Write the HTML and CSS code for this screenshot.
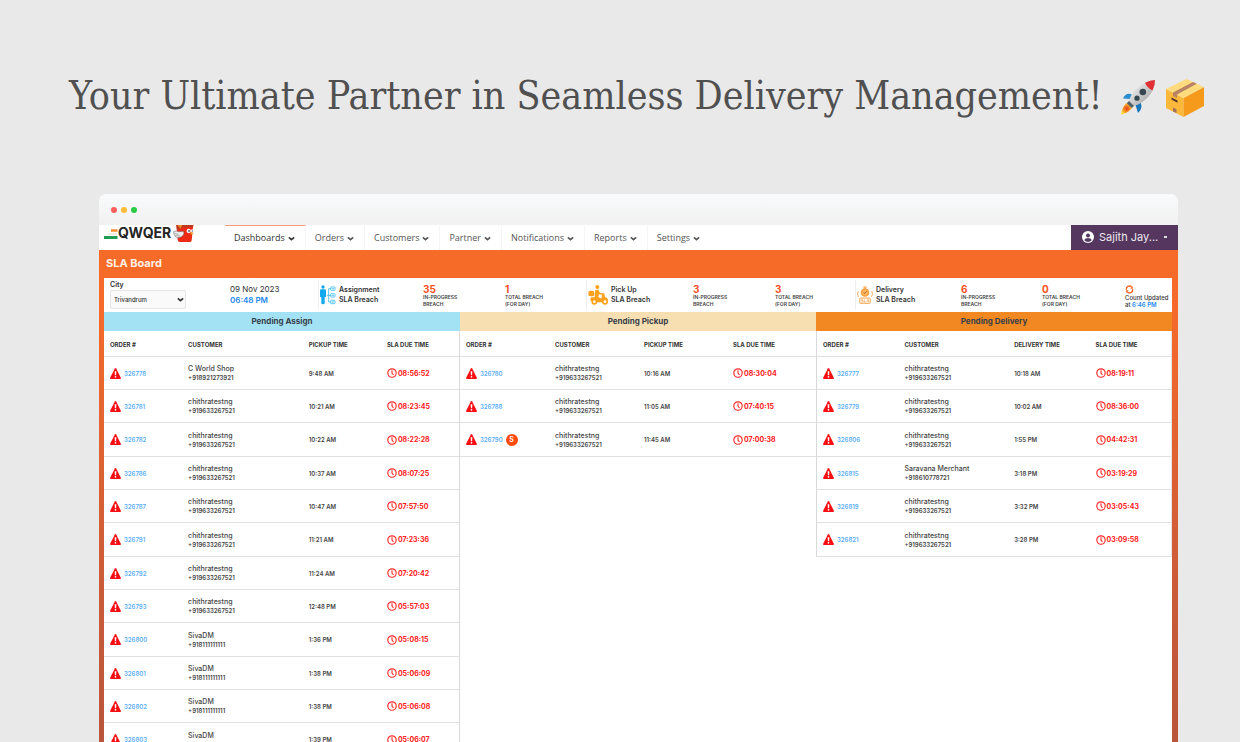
FILE: index.html
```
<!DOCTYPE html>
<html lang="en">
<head>
<meta charset="utf-8">
<title>SLA Board</title>
<link rel="stylesheet" href="styles.css">
</head>
<body>
<svg class="defs" aria-hidden="true">
  <symbol id="warn" viewBox="0 0 22 22"><path d="M9.600 1.200Q11-.8 12.400 1.200L21.700 19.300Q22.400 22 20 22H2Q-.4 22 .3 19.300Z" fill="#f80d12"/><path d="M9.300 6.500h3.400l-.5 8h-2.400z" fill="#fff"/><circle cx="11" cy="17.600" r="1.700" fill="#fff"/></symbol>
  <symbol id="clock" viewBox="0 0 20 20"><circle cx="10" cy="10" r="8.400" fill="none" stroke="#ff2929" stroke-width="2.300"/><path d="M10 4.500V10l3 4" fill="none" stroke="#ff2929" stroke-width="2.200"/></symbol>
  <symbol id="chev" viewBox="0 0 12 8"><path d="M1.500 2 6 6l4.500-4" fill="none" stroke="currentColor" stroke-width="2.800"/></symbol>
</svg>

<header class="hero">
  <h1 class="hero-title">Your Ultimate Partner in Seamless Delivery Management!</h1>
  <svg class="emoji" viewBox="0 0 36 36" role="img" aria-label="Rocket">
    <defs><linearGradient id="hull" x1="0" y1="0" x2="1" y2="1"><stop offset=".2" stop-color="#eee"/><stop offset=".8" stop-color="#a9a9ab"/></linearGradient><radialGradient id="fire"><stop offset="0" stop-color="#e5392d"/><stop offset=".5" stop-color="#f58a1f"/><stop offset="1" stop-color="#fdd835"/></radialGradient></defs>
    <path d="M12 15.500C8 13.500 5 15 3 19.500L10 20z" fill="#2a8fd0"/><path d="M20.500 23.500C22.500 28 21 31 18 34L15.500 26z" fill="#1976b8"/>
    <path d="M7.500 23.500C3.500 26 1.500 31 1 35.500C6 34.500 10.500 32 12.500 28z" fill="url(#fire)"/>
    <path d="M9.500 21.500 6.800 24.300 11.700 29 14.500 26.500z" fill="#52616b"/>
    <path d="M9 22C12 11 23 2 35 1C35 13 25 24 14 27Z" fill="url(#hull)"/>
    <path d="M25 3.800Q30 1.200 35 1Q35 6.500 32.500 11.500Q27 9 25 3.800Z" fill="#e13035"/>
    <circle cx="22.800" cy="13" r="3.300" fill="#37474f"/><circle cx="17" cy="19.200" r="2.600" fill="#37474f"/>
  </svg>
  <svg class="emoji emoji-box" viewBox="0 0 40 40" role="img" aria-label="Package">
    <path d="M1 11 18.500 20V39L1 30Z" fill="#fbb83a"/><path d="M18.500 20 39 9V28L18.500 39Z" fill="#f59a1b"/><path d="M1 11 21.500 1 39 9 18.500 20Z" fill="#ffdb7e"/>
    <path d="M8 14.600 28 4l3.800 1.700L12 16.500V20l-4-2z" fill="#b78363"/><path d="m6.500 19.500 6 3v2.200l-6-3.200z" fill="#4e342e"/><path d="m8 29.500 3.500 1.800V35L8 33.500z" fill="#a1745c"/>
  </svg>
</header>

<div class="window">
  <div class="titlebar"><span class="dot dot-red"></span><span class="dot dot-yellow"></span><span class="dot dot-green"></span></div>
  <div class="topbar">
    <a class="logo" href="#" aria-label="QWQER">
      <svg class="logo-dash" viewBox="0 0 14 12"><path d="M7 3.500h6.500" stroke="#f68b2d" stroke-width="2.600"/><path d="M4 7h9" stroke="#ece6d8" stroke-width="1.500"/><path d="M0 10.500h13.500" stroke="#1f9d55" stroke-width="2.800"/></svg>
      <span>QWQER</span>
      <svg class="logo-bird" viewBox="0 0 66 54"><path d="M10 0h51l-5 46q0 5-5 5H20q-5 0-6-7z" fill="#ed2a16"/><path d="M10 0h51l-1 6H32L12 16z" fill="#b83c1d"/><path d="M14 0l8 12 6-12z" fill="#f0862f"/><path d="M1 20q9-4 16 0l14-1q4 5 0 11-7 10-19 8Q2 34 1 20z" fill="#eee" stroke="#666" stroke-width="1.500"/><path d="m4 25 13 3m-11 4 16 1" stroke="#666" stroke-width="1.500"/><circle cx="47" cy="18" r="6.500" fill="#fff"/><circle cx="58" cy="18" r="5" fill="#fff"/><circle cx="48" cy="18" r="3" fill="#567"/><circle cx="58" cy="18" r="2" fill="#567"/><path d="m51 22 12 2-9 5z" fill="#f2a21c"/></svg>
    </a>
    <nav class="menu" id="menu"></nav>
    <button class="user"><svg class="avatar" viewBox="0 0 24 24"><circle cx="12" cy="12" r="12" fill="#fff"/><circle cx="12" cy="9" r="4" fill="#54365f"/><path d="M4.500 18.500Q6 14.500 9 14.500h6q3 0 4.500 4Q12 25 4.500 18.500z" fill="#54365f"/></svg><span>Sajith Jay...</span><span class="user-dot"></span></button>
  </div>
  <main class="board">
    <h2 class="board-title">SLA Board</h2>
    <section class="stats">
      <div class="city"><label for="city">City</label><div class="select-wrap"><select id="city"><option>Trivandrum</option></select><svg class="chev select-chev"><use href="#chev"/></svg></div></div>
      <div class="date"><span>09 Nov 2023</span><strong>06:48 PM</strong></div>
      <div class="kind"><svg class="kind-icon" viewBox="0 0 48 60"><g fill="#12a8ee"><circle cx="9" cy="6" r="5"/><path d="M3 13h12q3 0 3 4v17q0 3-4 3v18q0 3-5 3t-5-3V37q-4 0-4-3V17q0-4 3-4z"/></g><g fill="none" stroke="#36baf2" stroke-width="2.500"><path d="M20 31h12M31 11h-5v40h5"/><rect x="32" y="6" width="13" height="10" rx="2"/><rect x="32" y="26" width="13" height="10" rx="2"/><rect x="32" y="46" width="13" height="10" rx="2"/><path d="M35 11h7m-7 20h7m-7 20h7"/></g></svg><span>Assignment<br>SLA Breach</span></div>
      <div class="count"><strong>35</strong><span>IN-PROGRESS<br>BREACH</span></div>
      <div class="count"><strong>1</strong><span>TOTAL BREACH<br>(FOR DAY)</span></div>
      <div class="kind"><svg class="kind-icon kind-wide" viewBox="0 0 60 60"><g fill="#ffa11c"><circle cx="28" cy="6" r="6"/><rect x="1" y="17" width="18" height="17" rx="6"/><path d="M22 14h9l5 10 8 1-1 4-10-1-2 8 9 5 3-16h6l2 12q9 1 9 9h-9l-9 6H13l-7-9 4-6h10z"/></g><g fill="#fff" stroke="#ffa11c" stroke-width="5"><circle cx="19" cy="50" r="6.500"/><circle cx="51" cy="50" r="6.500"/></g></svg><span>Pick Up<br>SLA Breach</span></div>
      <div class="count"><strong>3</strong><span>IN-PROGRESS<br>BREACH</span></div>
      <div class="count"><strong>3</strong><span>TOTAL BREACH<br>(FOR DAY)</span></div>
      <div class="kind"><svg class="kind-icon" viewBox="0 0 52 60"><g fill="none" stroke="#f9a040"><path d="M4 17q-5 10 1 19M48 17q5 10-1 19" stroke-width="2.500"/><rect x="9" y="40" width="34" height="17" rx="2" stroke-width="3"/><path d="M20 44h-6v4h6v5h-7M24 44v9h6M33 54v-9h5v9m-5-4h5" stroke-width="1.800"/></g><circle cx="26" cy="22" r="14" fill="#f9a040"/><path d="M20 2h12v4h-4v4h-4V6h-4z" fill="#f9a040"/><circle cx="26" cy="22" r="8.500" fill="#ffb765"/><path d="m22 22 3 4 6-8" fill="none" stroke="#b5641d" stroke-width="3"/></svg><span>Delivery<br>SLA Breach</span></div>
      <div class="count"><strong>6</strong><span>IN-PROGRESS<br>BREACH</span></div>
      <div class="count"><strong>0</strong><span>TOTAL BREACH<br>(FOR DAY)</span></div>
      <div class="updated"><button class="refresh" aria-label="Refresh count"><svg viewBox="0 0 24 24"><g fill="none" stroke="#ff6424" stroke-width="3.600"><path d="M4 13a8 8 0 0 1 14-7"/><path d="M20 11a8 8 0 0 1-14 7"/></g><path d="M21 3v7h-7zM3 21v-7h7z" fill="#ff6424"/></svg></button><span>Count Updated<br>at <b>6:46 PM</b></span></div>
    </section>
    <section class="columns" id="columns"></section>
  </main>
</div>
<script src="board.js"></script>
</body>
</html>
```
FILE: styles.css
```
* { box-sizing: border-box; }
body { margin: 0; height: 100vh; overflow: hidden; background: #e9e9e9; font-family: Inter, "Liberation Sans", sans-serif; color: #333; }
button, select { font: inherit; }
a { color: inherit; text-decoration: none; }
.defs { position: absolute; width: 0; height: 0; }

.hero { display: flex; align-items: flex-start; padding: 66px 35px 68px 69px; }
.hero-title { margin: 0; flex: 1; font: 400 39px/60px "DejaVu Serif Condensed", "DejaVu Serif", serif; color: #505050; white-space: nowrap; }
.emoji { width: 36px; height: 36px; margin: 13px 9px 0 0; }
.emoji-box { width: 40px; height: 40px; margin: 12px 0 0; }

.window { margin: 0 62px 0 99px; border-radius: 8px 8px 0 0; overflow: hidden; background: #fff; }
.titlebar { display: flex; align-items: center; gap: 4px; height: 31px; padding-left: 12px; background: linear-gradient(#f9fafb, #f1f1f1); }
.dot { width: 6px; height: 6px; border-radius: 50%; }
.dot-red { background: #ff5f5c; }
.dot-yellow { background: #ffbd38; }
.dot-green { background: #2acb42; }

.topbar { display: flex; height: 25px; }
.logo { display: flex; align-items: flex-start; width: 126px; padding-left: 5px; font-size: 14px; line-height: 16px; font-weight: 700; color: #252525; }
.logo-dash { width: 14px; height: 12px; margin-top: 2px; }
.logo-bird { width: 22px; height: 18px; margin-left: 2px; }
.menu { display: flex; flex: 1; font: 9px/24px "Open Sans", sans-serif; color: #555; }
.menu a { display: flex; align-items: center; gap: 3px; padding: 0 10px 0 9px; border-top: 1px solid transparent; border-right: 1px solid #f5f5f5; }
.menu a:last-child { border-right: 0; }
.menu .current { border-top-color: #fb9a73; color: #333; }
.chev { width: 7px; height: 5px; }
.user { display: flex; align-items: center; gap: 5px; width: 107px; padding: 0 11px 2px; border: 0; background: #54365f; color: #eee8f0; font-size: 11px; }
.avatar { width: 12px; height: 12px; }
.user-dot { width: 3px; height: 2px; margin-left: auto; background: #ddd; }

.board { padding: 0 6px 0 5px; background: linear-gradient(#f76b28, #f56a2a 60px, #cd5c38 320px, #b9553c 492px); }
.board-title { margin: 0; padding: 0 0 2px 2px; font-size: 11px; line-height: 26px; font-weight: 700; color: #fff0e6; }
.stats { display: grid; grid-template-columns: 126fr 88fr 105fr 82fr 81fr 107fr 82fr 80fr 106fr 81fr 83fr 47fr; height: 34px; background: #fff; white-space: nowrap; }
.stats > * { min-width: 0; }
.city { display: flex; flex-direction: column; gap: 1px; padding: 3px 0 0 6px; font-size: 7px; line-height: 8px; font-weight: 600; }
.select-wrap { display: flex; align-items: center; width: 76px; position: relative; }
.city select { appearance: none; width: 100%; height: 19px; padding: 0 3px; border: 1px solid #e6e6e6; border-radius: 2px; background: #fafafa; font-size: 6px; font-weight: 500; color: #333; }
.select-chev { position: absolute; right: 2px; }
.date { display: flex; flex-direction: column; padding-top: 6px; font-size: 8px; line-height: 11px; }
.date strong { font-weight: 600; color: #2588ef; }
.kind { display: flex; align-items: center; gap: 3px; margin: 2px 0; border-left: 1px solid #eee; padding-left: 1px; font-size: 7px; line-height: 10px; font-weight: 600; }
.kind-icon { width: 16px; height: 20px; }
.kind-wide { width: 20px; }
.count { display: flex; flex-direction: column; padding-top: 6px; font-size: 5px; line-height: 7px; font-weight: 600; color: #444; }
.count strong { font-size: 10px; line-height: 10px; font-weight: 700; color: #fb4f22; }
.updated { padding-top: 6px; font-size: 6px; line-height: 7px; font-weight: 500; }
.updated span { display: block; }
.updated b { font-weight: 600; color: #2588ef; }
.refresh { display: block; width: 9px; height: 10px; padding: 0; border: 0; background: none; }
.refresh svg { display: block; width: 9px; height: 9px; }

.columns { display: grid; grid-template-columns: repeat(3, 1fr); background: #fff; }
.column { min-width: 0; }
.column h3 { margin: 0; height: 19px; font-size: 8px; line-height: 18px; font-weight: 700; text-align: center; color: #37404a; }
.assign h3 { background: #a3e1f5; }
.pickup h3 { background: #f8dfb2; }
.delivery h3 { background: #f28822; }
.orders { width: 100%; table-layout: fixed; border-collapse: separate; border-spacing: 0; font-size: 6px; }
.assign .orders { border-right: 1px solid #d9d9d9; }
.delivery .orders { border-left: 1px solid #d9d9d9; border-right: 1px solid #e5e5e5; }
.orders th, .orders td { padding: 0 0 0 6px; border-bottom: 1px solid #e1e1e1; text-align: left; white-space: nowrap; }
.orders th { height: 26px; padding-top: 2px; font-weight: 700; color: #333; }
.orders td { height: 33px; font-weight: 600; color: #444; }
.orders tbody tr:nth-child(3n) td { height: 34px; }
.assign .w1, .assign .w3, .assign .w4 { width: 22%; }
.assign .w2 { width: 34%; }
.pickup .w1, .pickup .w3, .pickup .w4 { width: 25%; }
.pickup .w2 { width: 25%; }
.delivery .w1, .delivery .w3, .delivery .w4 { width: 23%; }
.delivery .w2 { width: 31%; }
.cell { display: flex; align-items: center; }
.warn { width: 11px; height: 11px; margin-right: 3px; }
.order-link { color: #5aaefc; }
.badge { width: 12px; height: 12px; margin-left: 3px; border-radius: 50%; background: #ff4b0a; color: #fff; font-size: 7px; line-height: 12px; text-align: center; }
.customer { line-height: 9px; }
.name { font-size: 7px; font-weight: 500; }
.due { color: #ff2020; font-size: 7px; font-weight: 700; }
.clock { width: 10px; height: 10px; margin-right: 1px; }
```
FILE: board.js
```
const chev = '<svg class="chev"><use href="#chev"/></svg>';
document.getElementById('menu').innerHTML = ['Dashboards', 'Orders', 'Customers', 'Partner', 'Notifications', 'Reports', 'Settings']
  .map((t, i) => `<a href="#"${i ? '' : ' class="current"'}>${t} ${chev}</a>`).join('');

const C = 'chithratestng', P = '+919633267521', S = 'SivaDM', Q = '+918111111111';
const columns = [
  { key: 'assign', title: 'Pending Assign', time: 'PICKUP TIME', rows: [
    [326778, 'C World Shop', '+918921273921', '9:48 AM', '08:56:52'],
    [326781, C, P, '10:21 AM', '08:23:45'], [326782, C, P, '10:22 AM', '08:22:28'],
    [326786, C, P, '10:37 AM', '08:07:25'], [326787, C, P, '10:47 AM', '07:57:50'],
    [326791, C, P, '11:21 AM', '07:23:36'], [326792, C, P, '11:24 AM', '07:20:42'],
    [326793, C, P, '12:48 PM', '05:57:03'], [326800, S, Q, '1:36 PM', '05:08:15'],
    [326801, S, Q, '1:38 PM', '05:06:09'], [326802, S, Q, '1:38 PM', '05:06:08'],
    [326803, S, Q, '1:39 PM', '05:06:07']] },
  { key: 'pickup', title: 'Pending Pickup', time: 'PICKUP TIME', rows: [
    [326780, C, P, '10:16 AM', '08:30:04'], [326788, C, P, '11:05 AM', '07:40:15'],
    [326790, C, P, '11:45 AM', '07:00:38', 'S']] },
  { key: 'delivery', title: 'Pending Delivery', time: 'DELIVERY TIME', rows: [
    [326777, C, P, '10:18 AM', '08:19:11'], [326779, C, P, '10:02 AM', '08:36:00'],
    [326806, C, P, '1:55 PM', '04:42:31'], [326815, 'Saravana Merchant', '+918610778721', '3:18 PM', '03:19:29'],
    [326819, C, P, '3:32 PM', '03:05:43'], [326821, C, P, '3:28 PM', '03:09:58']] }
];
document.getElementById('columns').innerHTML = columns.map(c => `
  <div class="column ${c.key}"><h3>${c.title}</h3>
  <table class="orders"><thead><tr><th class="w1">ORDER #</th><th class="w2">CUSTOMER</th><th class="w3">${c.time}</th><th class="w4">SLA DUE TIME</th></tr></thead>
  <tbody>${c.rows.map(([id, name, phone, time, due, badge]) => `<tr>
    <td><div class="cell"><svg class="warn"><use href="#warn"/></svg><a class="order-link" href="#">${id}</a>${badge ? `<span class="badge">${badge}</span>` : ''}</div></td>
    <td><div class="customer"><span class="name">${name}</span><br>${phone}</div></td><td>${time}</td>
    <td><div class="cell due"><svg class="clock"><use href="#clock"/></svg>${due}</div></td></tr>`).join('')}</tbody></table></div>`).join('');
```
